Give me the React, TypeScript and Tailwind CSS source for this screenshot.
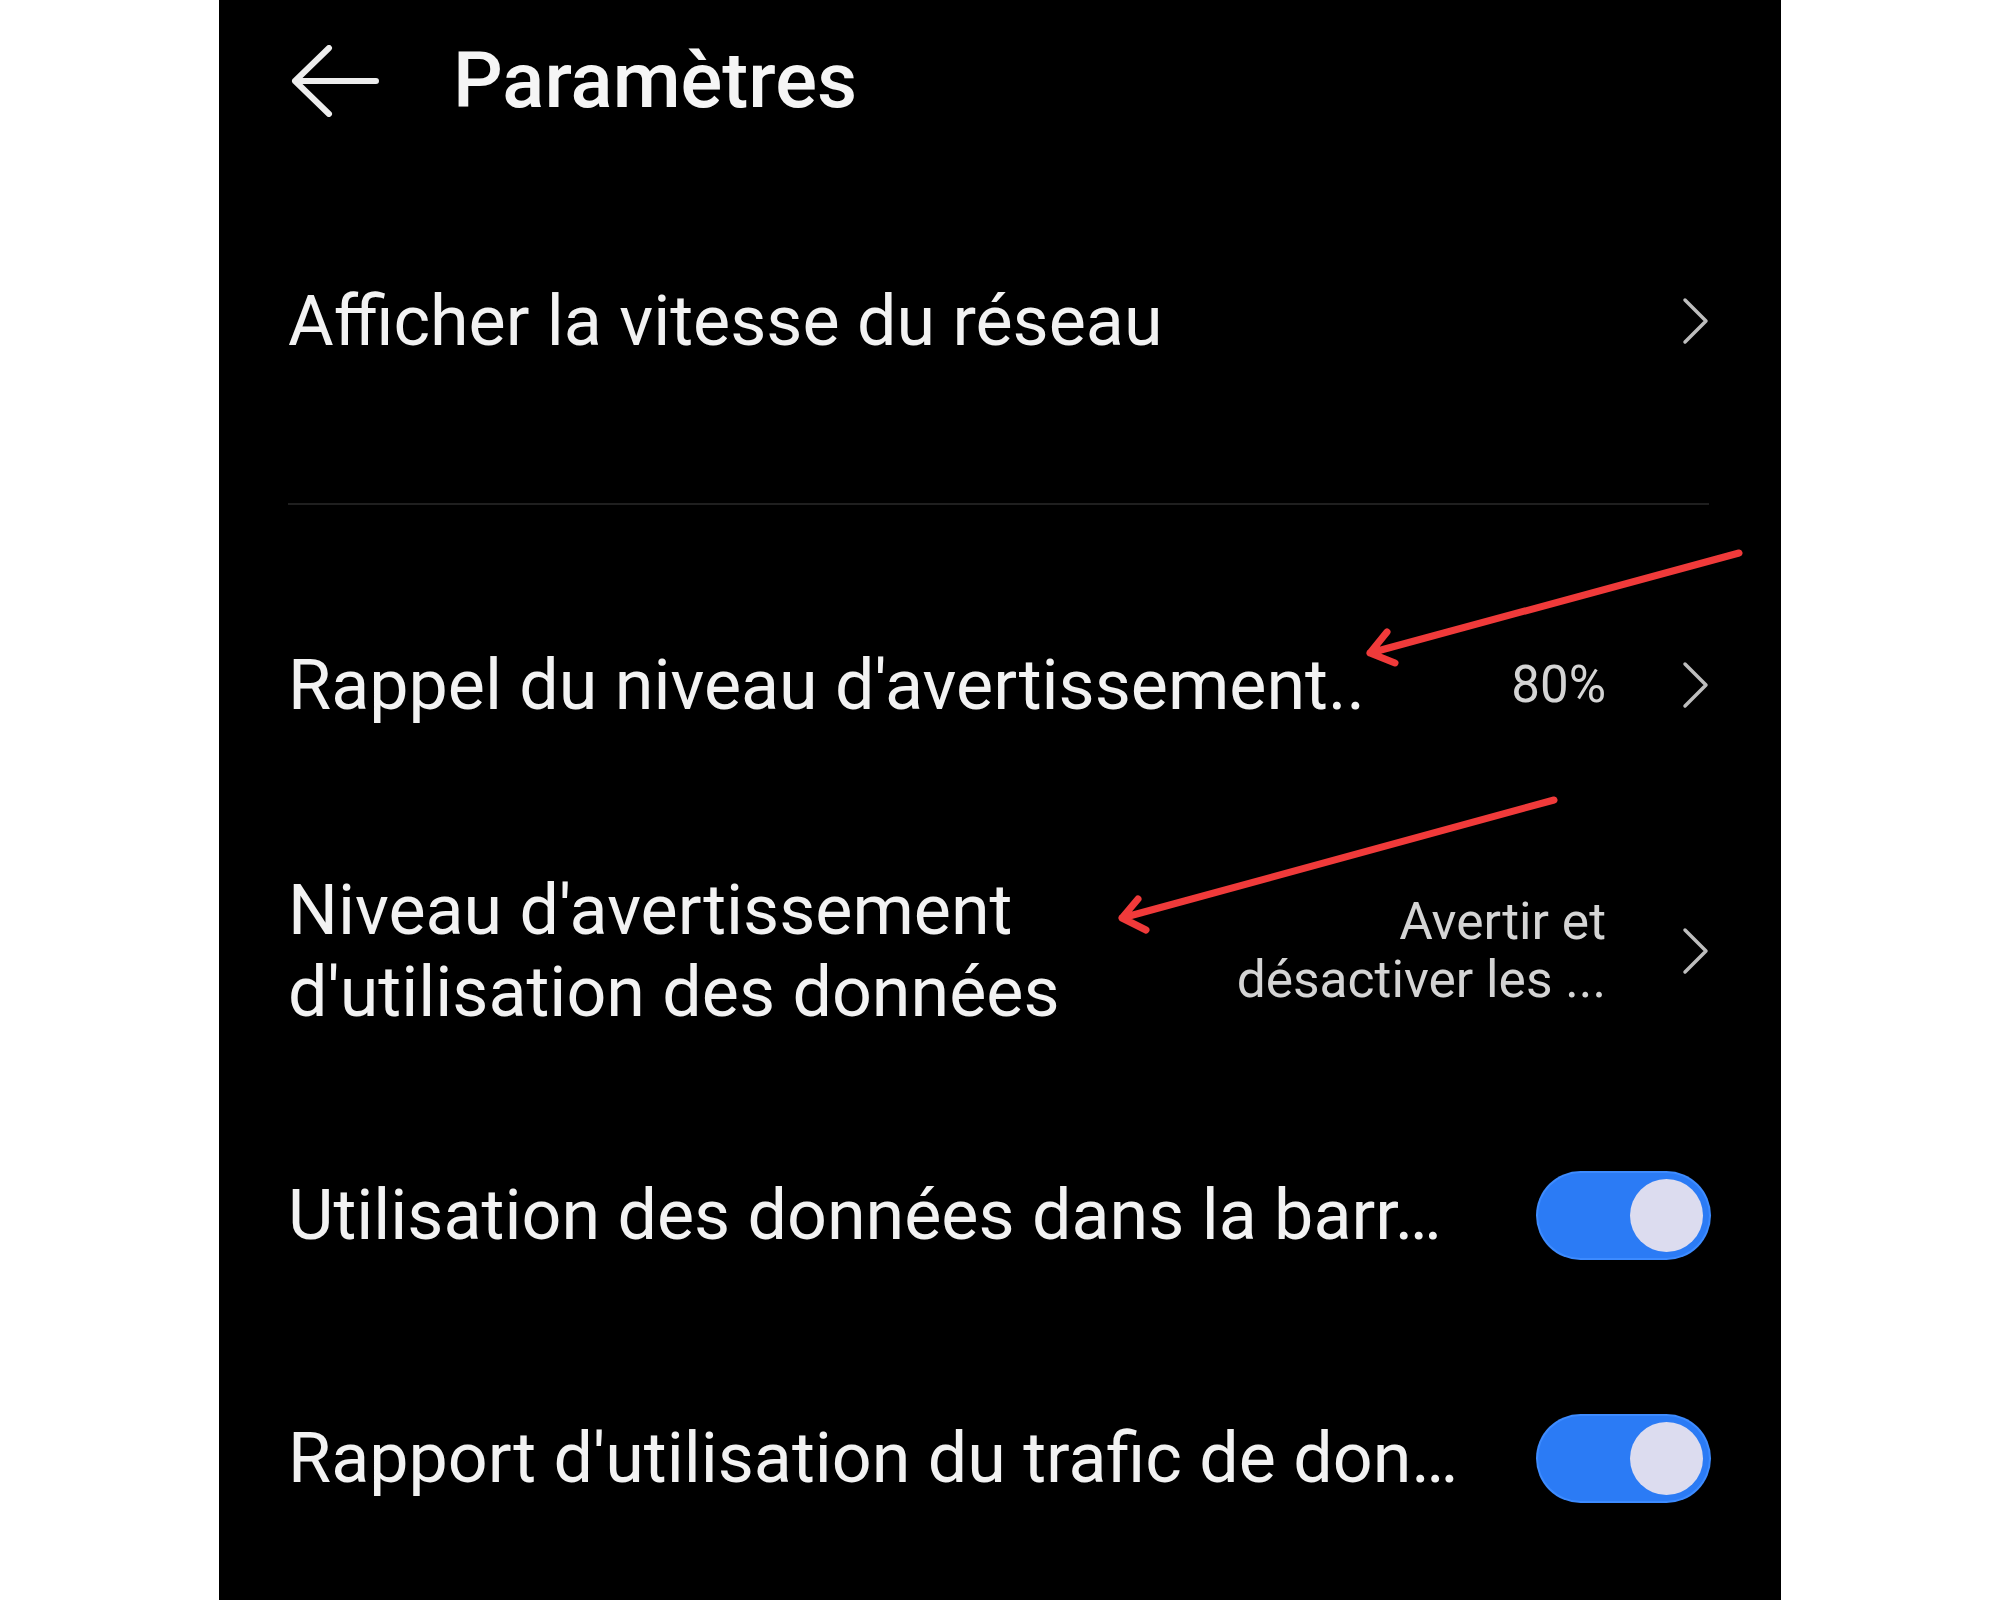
import React from "react";

function Chevron() {
  return (
    <svg width="28" height="50" viewBox="0 0 28 50" fill="none" className="shrink-0">
      <path
        d="M4 4 L25 25 L4 46"
        stroke="#bdbdbd"
        strokeWidth="3.5"
        strokeLinecap="round"
        strokeLinejoin="round"
      />
    </svg>
  );
}

function Toggle() {
  return (
    <div className="flex h-[85px] w-[171px] shrink-0 items-center justify-end rounded-full bg-[#2b7bf5] p-[6px] ring-2 ring-[#3d8bff]">
      <div className="h-[73px] w-[73px] rounded-full bg-[#dcdcef]" />
    </div>
  );
}

export default function App() {
  return (
    <div className="relative h-[1600px] w-full bg-white font-[Roboto,sans-serif]">
      <div className="mx-auto h-[1600px] w-[1562px] bg-black pl-[69px] pr-[72px] text-[#f2f2f2]">
        {/* Header */}
        <header className="flex h-[162px] items-center gap-[74px]">
          <svg width="88" height="72" viewBox="0 0 88 72" fill="none" className="ml-[3px] shrink-0">
            <path
              d="M4 36 H85 M38 3 L4 36 L38 69"
              stroke="#ededed"
              strokeWidth="6"
              strokeLinecap="round"
              strokeLinejoin="round"
            />
          </svg>
          <h1 className="text-[78px] font-medium leading-none text-[#f5f5f5]">Paramètres</h1>
        </header>

        {/* Afficher la vitesse */}
        <div className="flex h-[318px] items-center justify-between">
          <span className="text-[70px] leading-[82px]">Afficher la vitesse du réseau</span>
          <Chevron />
        </div>
        <div className="mt-[23px] h-[2px] bg-[#1f1f1f]" />

        {/* Rappel */}
        <div className="flex h-[360px] items-center justify-between">
          <span className="text-[70px] leading-[82px]">Rappel du niveau d'avertissement..</span>
          <div className="flex items-center gap-[75px]">
            <span className="text-[51px] leading-[58px] text-[#d4d4d4]">80%</span>
            <Chevron />
          </div>
        </div>

        {/* Niveau */}
        <div className="flex h-[172px] items-center justify-between">
          <div className="text-[70px] leading-[82px]">
            <span className="block">Niveau d'avertissement</span>
            <span className="block">d'utilisation des données</span>
          </div>
          <div className="flex items-center gap-[75px]">
            <div className="text-right text-[51.5px] leading-[58px] text-[#d4d4d4]">
              <span className="block">Avertir et</span>
              <span className="block">désactiver les ...</span>
            </div>
            <Chevron />
          </div>
        </div>

        {/* Toggles */}
        <div className="flex h-[356px] items-center justify-between">
          <span className="text-[70px] leading-[82px]">Utilisation des données dans la barr…</span>
          <Toggle />
        </div>
        <div className="flex h-[130px] items-center justify-between">
          <span className="text-[70px] leading-[82px]">Rapport d'utilisation du trafic de don…</span>
          <Toggle />
        </div>
      </div>

      {/* annotations */}
      <svg
        className="pointer-events-none absolute inset-0"
        width="2000"
        height="1600"
        viewBox="0 0 2000 1600"
        fill="none"
      >
        <g stroke="#f03a3a" strokeWidth="7" strokeLinecap="round" strokeLinejoin="round">
          <path d="M1739 553 L1370 653 M1387 632 L1370 653 L1395 663" />
          <path d="M1554 800 L1122 918 M1138 899 L1122 918 L1146 930" />
        </g>
      </svg>
    </div>
  );
}
